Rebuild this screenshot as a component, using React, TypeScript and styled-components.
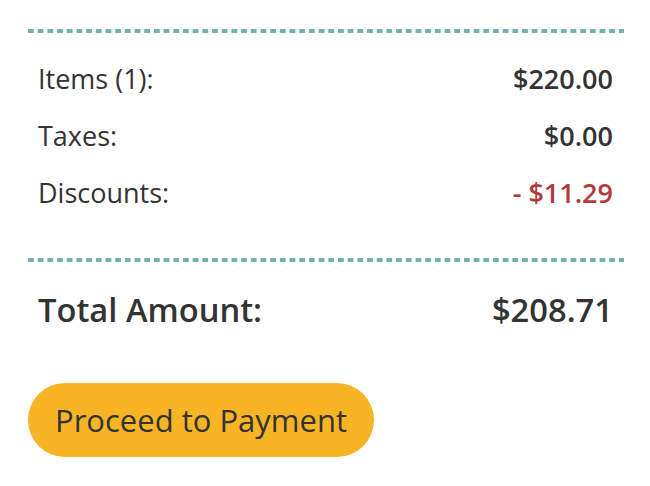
import React from "react";
import styled, { createGlobalStyle } from "styled-components";

const Global = createGlobalStyle`
  html, body { margin: 0; padding: 0; background: #fff; }
  body { font-family: "Open Sans", "Noto Sans", sans-serif; color: #333; }
`;

const Wrapper = styled.div`
  width: 596px;
  padding: 29px 26px 0 28px;
  display: flex;
  flex-direction: column;
`;

const Divider = styled.div`
  height: 4px;
  background-image: linear-gradient(to right, #72b1b1 0 6px, transparent 6px 10px);
  background-size: 9.7px 4px;
  background-repeat: repeat-x;
`;

const Lines = styled.div`
  display: flex;
  flex-direction: column;
  padding: 29px 11px 48px 10px;
  gap: 23px;
`;

const Row = styled.div`
  display: flex;
  justify-content: space-between;
  align-items: center;
  font-size: 27px;
  line-height: 34px;
`;

const Label = styled.span`
  font-weight: 400;
`;

const Value = styled.span<{ $negative?: boolean }>`
  font-weight: 600;
  color: ${(p) => (p.$negative ? "#b03a3c" : "#333")};
`;

const TotalRow = styled.div`
  display: flex;
  justify-content: space-between;
  align-items: center;
  padding: 26px 11px 0 10px;
  font-size: 32.7px;
  line-height: 44px;
  font-weight: 600;
`;

const PayButton = styled.button`
  align-self: flex-start;
  margin-top: 51px;
  height: 74px;
  padding: 0 27px;
  border: none;
  border-radius: 37px;
  background: #f7b526;
  color: #333;
  font-family: "Open Sans", "Noto Sans", sans-serif;
  font-size: 31px;
  font-weight: 400;
  cursor: pointer;
`;

export default function App() {
  return (
    <>
      <Global />
      <Wrapper>
        <Divider />
        <Lines>
          <Row>
            <Label>Items (1):</Label>
            <Value>$220.00</Value>
          </Row>
          <Row>
            <Label>Taxes:</Label>
            <Value>$0.00</Value>
          </Row>
          <Row>
            <Label>Discounts:</Label>
            <Value $negative>- $11.29</Value>
          </Row>
        </Lines>
        <Divider />
        <TotalRow>
          <span>Total Amount:</span>
          <span>$208.71</span>
        </TotalRow>
        <PayButton>Proceed to Payment</PayButton>
      </Wrapper>
    </>
  );
}
